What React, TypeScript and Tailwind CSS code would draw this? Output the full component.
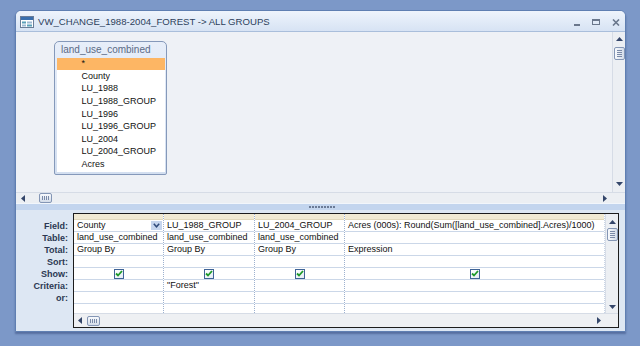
import React from 'react';

const F = "font-['Liberation_Sans',Arial,sans-serif]";

function Tri({ dir }: { dir: 'up' | 'down' | 'left' | 'right' }) {
  const c = '#34466a';
  if (dir === 'up')
    return (
      <svg width="7" height="4" viewBox="0 0 7 4"><path d="M0 4L3.5 0L7 4Z" fill={c} /></svg>
    );
  if (dir === 'down')
    return (
      <svg width="7" height="4" viewBox="0 0 7 4"><path d="M0 0L3.5 4L7 0Z" fill={c} /></svg>
    );
  if (dir === 'left')
    return (
      <svg width="4" height="7" viewBox="0 0 4 7"><path d="M4 0L0 3.5L4 7Z" fill={c} /></svg>
    );
  return (
    <svg width="4" height="7" viewBox="0 0 4 7"><path d="M0 0L4 3.5L0 7Z" fill={c} /></svg>
  );
}

function VThumb() {
  return (
    <div className="w-[11px] h-[13px] shrink-0 rounded-[2px] border border-[#8496b5] bg-gradient-to-r from-[#f8fafd] to-[#d3dce9] flex flex-col items-center justify-center gap-[1px]">
      {[0, 1, 2, 3].map((i) => (
        <div key={i} className="w-[5px] h-px bg-[#7a8aa8]" />
      ))}
    </div>
  );
}

function HThumb() {
  return (
    <div className="w-[13px] h-[10px] shrink-0 rounded-[2px] border border-[#8496b5] bg-gradient-to-b from-[#f8fafd] to-[#d3dce9] flex flex-row items-center justify-center gap-[1px]">
      {[0, 1, 2, 3].map((i) => (
        <div key={i} className="w-px h-[4px] bg-[#7a8aa8]" />
      ))}
    </div>
  );
}

function Check() {
  return (
    <div className="w-[10px] h-[10px] border border-[#3f6396] bg-gradient-to-br from-[#ffffff] to-[#e3ebf5] flex items-center justify-center">
      <svg width="8" height="7" viewBox="0 0 8 7">
        <path d="M1 3.5L3 5.5L7 1" stroke="#1e9a2a" strokeWidth="1.8" fill="none" />
      </svg>
    </div>
  );
}

function TitleIcon() {
  return (
    <svg width="14" height="12" viewBox="0 0 14 12">
      <rect x="0.5" y="0.5" width="13" height="11" fill="#ffffff" stroke="#6a7d98" />
      <rect x="1" y="1" width="12" height="3" fill="#3a6fae" />
      <rect x="2" y="5.5" width="4" height="2" fill="#5aa0b8" />
      <rect x="7" y="5.5" width="5" height="2" fill="#9db9d4" />
      <rect x="2" y="8.5" width="4" height="2" fill="#9db9d4" />
      <rect x="7" y="8.5" width="5" height="2" fill="#5aa0b8" />
    </svg>
  );
}

const fields = [
  'County',
  'LU_1988',
  'LU_1988_GROUP',
  'LU_1996',
  'LU_1996_GROUP',
  'LU_2004',
  'LU_2004_GROUP',
  'Acres',
];

const labels = ['Field:', 'Table:', 'Total:', 'Sort:', 'Show:', 'Criteria:', 'or:'];

type Col = { w: string; cells: string[]; dd?: boolean; last?: boolean };
const cols: Col[] = [
  { w: 'w-[90px]', cells: ['County', 'land_use_combined', 'Group By', '', 'check', '', ''], dd: true },
  { w: 'w-[91px]', cells: ['LU_1988_GROUP', 'land_use_combined', 'Group By', '', 'check', '"Forest"', ''] },
  { w: 'w-[90px]', cells: ['LU_2004_GROUP', 'land_use_combined', 'Group By', '', 'check', '', ''] },
  {
    w: 'w-[260px]',
    cells: ['Acres (000s): Round(Sum([land_use_combined].Acres)/1000)', '', 'Expression', '', 'check', '', ''],
    last: true,
  },
];

export default function App() {
  return (
    <div className={`w-[640px] h-[346px] bg-[#7c98c8] pt-[10px] pl-[15px] overflow-hidden ${F}`}>
      <div className="w-[611px] h-[322px] border border-[#5f7fb2] rounded-t-[6px] bg-[#dde7f3] flex flex-col overflow-hidden shadow-[0_2px_2px_rgba(40,60,110,0.45)]">
        {/* Title bar */}
        <div className="h-[21px] shrink-0 border-b border-[#a9bedb] bg-gradient-to-b from-[#eef4fc] to-[#d7e3f4] flex items-center pl-[4px] pr-[5px] pt-[2px]">
          <TitleIcon />
          <span className="ml-[4px] text-[9.6px] text-[#2d3f5c] whitespace-nowrap">
            VW_CHANGE_1988-2004_FOREST -&gt; ALL GROUPS
          </span>
          <div className="flex-1" />
          <div className="flex items-center gap-[12px]">
            <div className="w-[6px] h-[2px] bg-[#6a778c] mt-[5px]" />
            <div className="w-[8px] h-[6px] border border-[#6a778c] border-t-[2px]" />
            <svg width="8" height="7" viewBox="0 0 8 7">
              <path d="M1 0.5L7 6.5M7 0.5L1 6.5" stroke="#6a778c" strokeWidth="1.6" />
            </svg>
          </div>
        </div>

        {/* Upper pane */}
        <div className="h-[171px] shrink-0 flex flex-col">
          <div className="h-[160px] flex">
            <div className="flex-1 bg-[#eef1f6]">
              <div className="ml-[38px] mt-[9px] w-[113px] h-[134px] border border-[#8599ba] rounded-t-[5px] rounded-b-[2px] bg-gradient-to-b from-[#e7eef9] to-[#d3dff0] flex flex-col">
                <div className="h-[16px] shrink-0 pl-[6px] flex items-center text-[10px] text-[#5b6b86] leading-none">
                  land_use_combined
                </div>
                <div className="flex-1 mx-[1.5px] mb-[2px] bg-white flex flex-col">
                  <div className="h-[12px] shrink-0 bg-[#fdb664] pl-[25px] text-[9px] leading-[10px] text-[#111]">*</div>
                  {fields.map((f) => (
                    <div key={f} className="h-[12.6px] shrink-0 pl-[25px] flex items-center text-[9px] text-[#111] leading-none">
                      {f}
                    </div>
                  ))}
                </div>
              </div>
            </div>
            <div className="w-[13px] shrink-0 bg-[#eceff3] border-l border-[#d6dce6] flex flex-col items-center pt-[5px] pb-[6px]">
              <Tri dir="up" />
              <div className="mt-[6px]">
                <VThumb />
              </div>
              <div className="flex-1" />
              <Tri dir="down" />
            </div>
          </div>
          <div className="h-[11px] flex">
            <div className="flex-1 bg-[#eceff3] border-t border-[#d6dce6] flex items-center pl-[5px] pr-[5px]">
              <Tri dir="left" />
              <div className="ml-[14px]">
                <HThumb />
              </div>
              <div className="flex-1" />
              <Tri dir="right" />
            </div>
            <div className="w-[13px] bg-[#eceff3] border-t border-[#d6dce6]" />
          </div>
        </div>

        {/* Splitter */}
        <div className="h-[7px] shrink-0 bg-[#c3d5ee] border-t border-[#f2f6fb] flex items-center justify-center">
          <div className="flex gap-[1px] ml-[2px]">
            {[0, 1, 2, 3, 4, 5, 6, 7, 8].map((i) => (
              <div key={i} className="w-[2px] h-[2px] bg-[#6b7b96]" />
            ))}
          </div>
        </div>

        {/* Lower pane */}
        <div className="flex-1 flex pt-[3px]">
          <div className="w-[57px] shrink-0 flex flex-col pt-[7px] pr-[5px]">
            {labels.map((l) => (
              <div key={l} className="h-[12px] flex items-center justify-end text-[9px] font-bold text-[#2b3852] leading-none">
                {l}
              </div>
            ))}
          </div>
          <div className="w-[546px] h-[115px] shrink-0 border border-[#1c1c1c] bg-white flex flex-col">
            <div className="h-[99px] flex">
              {cols.map((c, ci) => (
                <div
                  key={ci}
                  className={`${c.w} shrink-0 flex flex-col border-r border-dotted ${c.last ? 'border-[#c9d5e6]' : 'border-[#9db1cf]'}`}
                >
                  <div className="h-[6px] shrink-0 bg-[#f1ead3] border-b border-[#e2d9bc]" />
                  {c.cells.map((t, ri) => (
                    <div
                      key={ri}
                      className={`h-[12px] shrink-0 border-b border-[#cbd7e8] flex items-center text-[9px] text-[#111] leading-none whitespace-nowrap overflow-hidden ${t === 'check' ? 'justify-center' : 'pl-[3px]'}`}
                    >
                      {t === 'check' ? (
                        <Check />
                      ) : (
                        <>
                          <span className="flex-1">{t}</span>
                          {c.dd && ri === 0 ? (
                            <div className="w-[11px] h-[9px] mr-[1px] bg-[#c5d5ee] flex items-center justify-center">
                              <svg width="7" height="5" viewBox="0 0 7 5">
                                <path d="M0.8 0.8L3.5 3.8L6.2 0.8" stroke="#2f4a7a" strokeWidth="1.5" fill="none" />
                              </svg>
                            </div>
                          ) : null}
                        </>
                      )}
                    </div>
                  ))}
                  <div className="flex-1" />
                </div>
              ))}
              <div className="w-[13px] shrink-0 bg-[#eceff3] border-l border-[#d6dce6] flex flex-col items-center pt-[6px] pb-[4px]">
                <Tri dir="up" />
                <div className="mt-[4px]">
                  <VThumb />
                </div>
                <div className="flex-1" />
                <Tri dir="down" />
              </div>
            </div>
            <div className="flex-1 flex">
              <div className="flex-1 bg-[#eef0f3] border-t border-[#d6dce6] flex items-center pl-[4px] pr-[4px]">
                <Tri dir="left" />
                <div className="ml-[5px]">
                  <HThumb />
                </div>
                <div className="flex-1" />
                <Tri dir="right" />
              </div>
              <div className="w-[13px] bg-[#eef0f3] border-t border-[#d6dce6]" />
            </div>
          </div>
        </div>
      </div>
    </div>
  );
}
